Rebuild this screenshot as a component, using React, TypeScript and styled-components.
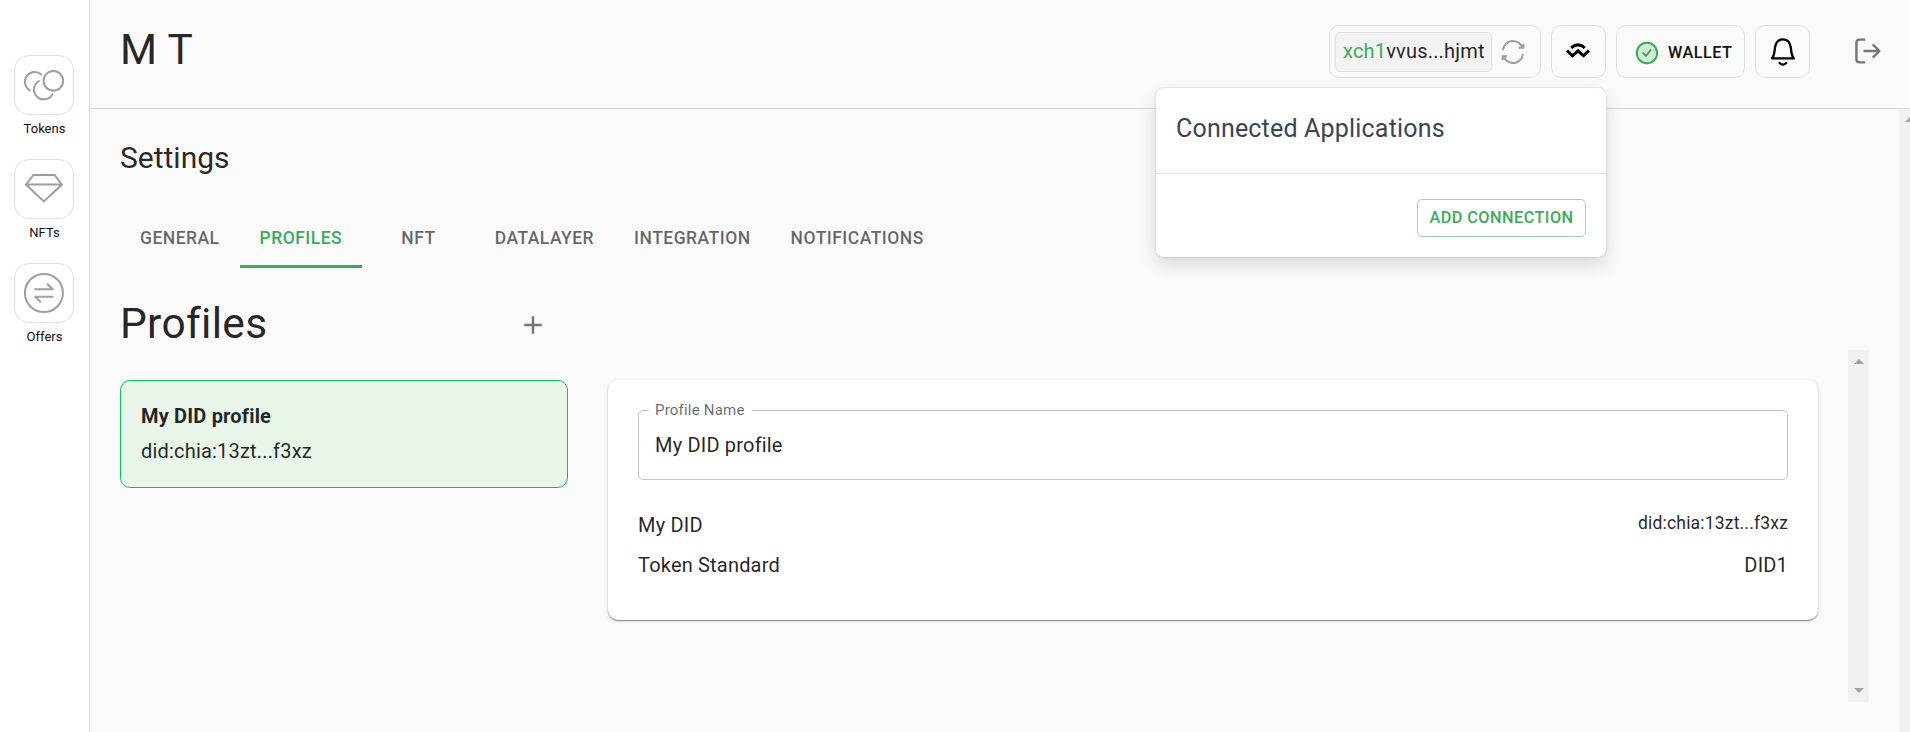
import React from "react";
import styled, { createGlobalStyle } from "styled-components";

const GlobalStyle = createGlobalStyle`
  *, *::before, *::after { box-sizing: border-box; }
  body {
    margin: 0;
    background: #fafafa;
    color: rgba(0, 0, 0, 0.87);
    font-family: Roboto, "Liberation Sans", sans-serif;
    font-size: 20px;
    letter-spacing: 0.00938em;
    overflow: hidden;
  }
  h1, h2, h3, p { margin: 0; font-weight: 400; }
  button { font: inherit; letter-spacing: inherit; color: inherit; padding: 0; background: none; border: 0; }
  svg { display: block; flex: none; }
`;

const Shell = styled.div`
  display: flex;
  height: 732px;
`;

const Sidebar = styled.nav`
  flex: none;
  width: 90px;
  padding: 55px 15px 0 14px;
  background: #fff;
  border-right: 1px solid #dcdcdc;
  display: flex;
  flex-direction: column;
  gap: 20px;
`;

const SideItem = styled.a`
  display: flex;
  flex-direction: column;
  align-items: center;
  gap: 4px;
`;

const SideIcon = styled.span`
  width: 60px;
  height: 60px;
  border: 1px solid #e0e0e0;
  border-radius: 15px;
`;

const SideLabel = styled.span`
  padding-left: 1px;
  font-size: 13px;
  line-height: 20px;
  letter-spacing: 0;
  color: #111;
`;

const Main = styled.div`
  flex: 1;
  min-width: 0;
  display: flex;
  flex-direction: column;
`;

const Header = styled.header`
  position: relative;
  flex: none;
  height: 109px;
  padding: 25px 28px 0 30px;
  border-bottom: 1px solid #d9d9d9;
  display: flex;
  align-items: flex-start;
`;

const WalletName = styled.h1`
  flex: 1;
  font-size: 42.5px;
  line-height: 49px;
  letter-spacing: 0.00735em;
`;

const Actions = styled.div`
  display: flex;
  gap: 10px;
`;

const Outlined = styled.div<{ $width: number }>`
  width: ${(p) => p.$width}px;
  height: 53px;
  border: 1px solid #e0e0e0;
  border-radius: 10px;
  display: flex;
  align-items: center;
  justify-content: center;
`;

const AddressBox = styled(Outlined)`
  justify-content: flex-start;
  padding-left: 5px;
  gap: 9px;
`;

const ConnectBox = styled(Outlined)`
  padding: 0 2px 2px 0;
`;

const Address = styled.div`
  width: 157px;
  height: 40px;
  padding-left: 7px;
  line-height: 36px;
  background: #f3f3f3;
  border: 1px solid #e0e0e0;
  border-radius: 5px;
  white-space: nowrap;
`;

const Prefix = styled.span`
  color: #3aac59;
`;

const WalletButton = styled(Outlined)`
  justify-content: flex-start;
  padding: 2px 0 0 18px;
  gap: 9px;
  font-size: 16.25px;
  letter-spacing: 0.02857em;
  font-weight: 500;
  color: #111;
`;

const LogoutButton = styled.button`
  margin: 12px 0 0 44px;
`;

const Popover = styled.section`
  position: absolute;
  z-index: 2;
  top: 88px;
  left: 1066px;
  width: 450px;
  height: 169px;
  background: #fff;
  border-radius: 8px;
  box-shadow: 0 0 2px rgba(0, 0, 0, 0.22), 0 8px 18px rgba(0, 0, 0, 0.14);
`;

const PopoverTitle = styled.h2`
  height: 86px;
  padding: 21px 20px 0;
  border-bottom: 1px solid #e0e0e0;
  font-size: 25px;
  line-height: 40px;
  letter-spacing: 0.0075em;
  color: #3b4455;
`;

const PopoverActions = styled.div`
  display: flex;
  justify-content: flex-end;
  padding: 25px 20px 0;
`;

const AddConnection = styled.button`
  width: 169px;
  height: 38px;
  padding-bottom: 2px;
  border: 1px solid #9cd5ac;
  border-radius: 5px;
  color: #3aac59;
  font-size: 16.25px;
  font-weight: 500;
  letter-spacing: 0.02857em;
  white-space: nowrap;
`;

const Body = styled.div`
  flex: 1;
  min-height: 0;
  display: flex;
`;

const Content = styled.main`
  flex: 1;
  min-width: 0;
  padding: 29px 30px 30px;
  display: flex;
  flex-direction: column;
`;

const PageTitle = styled.h2`
  font-size: 30px;
  line-height: 40px;
  letter-spacing: 0;
`;

const Tabs = styled.div`
  display: flex;
  flex: none;
  height: 60px;
  margin-top: 30px;
`;

const Tab = styled.button<{ $active: boolean }>`
  min-width: 112.5px;
  padding: 3px 20px 0;
  border-bottom: 3px solid ${(p) => (p.$active ? "#3aac59" : "transparent")};
  color: ${(p) => (p.$active ? "#3aac59" : "rgba(0, 0, 0, 0.6)")};
  font-size: 17.5px;
  font-weight: 500;
  letter-spacing: 0.0275em;
`;

const ProfilesBar = styled.div`
  display: flex;
  align-items: center;
  justify-content: space-between;
  flex: none;
  width: 448px;
  height: 52px;
  margin-top: 30px;
`;

const ProfilesTitle = styled.h2`
  font-size: 42.5px;
  line-height: 52px;
  letter-spacing: 0.00735em;
`;

const AddButton = styled.button`
  padding: 2px 20px 0 0;
`;

const Panels = styled.div`
  flex: 1;
  display: flex;
`;

const ProfileCard = styled.article`
  flex: none;
  width: 448px;
  height: 108px;
  margin-top: 30px;
  padding: 18px 20px;
  background: #e8f5e9;
  border: 1px solid #00c853;
  border-radius: 10px;
  line-height: 35px;
`;

const CardName = styled.h3`
  font-size: 20px;
  font-weight: 700;
`;

const DetailCard = styled.article`
  flex: 1;
  height: 240px;
  margin: 30px 30px 0 40px;
  padding: 30px;
  background: #fff;
  border-radius: 10px;
  box-shadow: 0 1px 1px rgba(0, 0, 0, 0.4), 0 1px 4px rgba(0, 0, 0, 0.14);
`;

const Field = styled.fieldset`
  height: 80px;
  margin: -10px 0 30px;
  padding: 0 10px;
  border: 1px solid #c4c4c4;
  border-radius: 5px;
`;

const FieldLabel = styled.legend`
  height: 20px;
  padding: 0 7px 0 6px;
  font-size: 15px;
  line-height: 20px;
  letter-spacing: 0.014em;
  color: rgba(0, 0, 0, 0.6);
`;

const FieldValue = styled.p`
  padding: 11px 6px 0;
  line-height: 29px;
`;

const Row = styled.div`
  display: flex;
  justify-content: space-between;
  height: 30px;
  line-height: 30px;
  margin-bottom: 10px;
`;

const DidValue = styled.span`
  font-size: 17.5px;
  line-height: 26px;
`;

const InnerScrollbar = styled.div`
  flex: none;
  width: 21px;
  padding: 9px 0;
  background: #f1f1f1;
  display: flex;
  flex-direction: column;
  align-items: center;
  justify-content: space-between;
`;

const PageScrollbar = styled.div`
  flex: none;
  width: 11px;
  padding: 8px 0 0 6px;
  background: #f1f1f1;
  overflow: hidden;
`;

const stroke = {
  fill: "none",
  stroke: "#9e9e9e",
  strokeWidth: 2,
  strokeLinecap: "round" as const,
  strokeLinejoin: "round" as const,
};

const sideItems = [
  {
    label: "Tokens",
    icon: (
      <>
        <circle cx="39.4" cy="25.8" r="9.8" />
        <path d="M27.3 19.4A9.9 9.9 0 1 0 15.8 35.4" />
        <path d="M25 26A9.8 9.8 0 1 0 38.3 39.4" />
      </>
    ),
  },
  {
    label: "NFTs",
    icon: <path strokeLinejoin="miter" d="M19.4 16H40.6L48 25.6L29.8 42.4L12 25.6ZM12 25.6H48" />,
  },
  {
    label: "Offers",
    icon: (
      <>
        <circle cx="29.9" cy="30" r="19" />
        <path d="M21.2 26.3H38.7L33.6 21.2M38.7 33.7H21.2L26.3 38.8" />
      </>
    ),
  },
];

const tabs = ["GENERAL", "PROFILES", "NFT", "DATALAYER", "INTEGRATION", "NOTIFICATIONS"];

const RefreshIcon = () => (
  <svg width="24" height="24" viewBox="-12 -12 24 24" {...stroke} strokeLinecap="butt" strokeLinejoin="miter">
    <path d="M-10 -1.8A10 10 0 0 1 9.3 -4.6M10.4 -8.2V-4.3H5.8" />
    <path d="M10 1.8A10 10 0 0 1 -9.3 4.6M-10.4 8.2V4.3H-5.8" />
  </svg>
);

const ConnectIcon = () => (
  <svg width="26" height="18" viewBox="-13 -9 26 18" {...stroke} stroke="#000" strokeWidth={3} strokeLinecap="butt" strokeLinejoin="miter">
    <path d="M-11 -0.4L-5.5 4.8L0 -0.2L5.5 4.8L11 -0.4" />
    <path d="M-6.8 -3.2Q0 -9 6.8 -3.2" />
  </svg>
);

const CheckIcon = () => (
  <svg width="24" height="24" viewBox="0 0 24 24" {...stroke} stroke="#3aac59">
    <circle cx="12" cy="12" r="10.2" fill="#d5ecdb" />
    <path d="M8.2 12.3L11 14.9L15.6 9" />
  </svg>
);

const BellIcon = () => (
  <svg width="28" height="30" viewBox="0 0 28 30" {...stroke} stroke="#000" strokeWidth={2.3}>
    <path d="M3 21.3C5.5 18.5 5.3 15.5 6 10.5C6.7 5.5 9.6 2.4 13.9 2.4C18.2 2.4 21.1 5.5 21.8 10.5C22.5 15.5 22.3 18.5 24.8 21.3Z" />
    <path d="M10.6 26Q13.9 29.2 17.2 26" />
  </svg>
);

const LogoutIcon = () => (
  <svg width="28" height="28" viewBox="0 0 28 28" {...stroke} stroke="#757575" strokeWidth={2.4} strokeLinecap="butt">
    <path d="M11.2 2.6H5.6Q2.4 2.6 2.4 5.8V22.2Q2.4 25.4 5.6 25.4H11.2" />
    <path d="M9.6 14H25.2M18.8 7.4L25.4 14L18.8 20.6" />
  </svg>
);

const Arrow = ({ down = false }: { down?: boolean }) => (
  <svg width="10" height="5" viewBox="0 0 10 5" fill="#a3a3a3">
    <path d={down ? "M0 0H10L5 5Z" : "M0 5H10L5 0Z"} />
  </svg>
);

export default function App() {
  return (
    <Shell>
      <GlobalStyle />
      <Sidebar>
        {sideItems.map((item) => (
          <SideItem key={item.label}>
            <SideIcon>
              <svg width="58" height="58" viewBox="1 1 58 58" {...stroke}>
                {item.icon}
              </svg>
            </SideIcon>
            <SideLabel>{item.label}</SideLabel>
          </SideItem>
        ))}
      </Sidebar>
      <Main>
        <Header>
          <WalletName>M T</WalletName>
          <Actions>
            <AddressBox $width={212}>
              <Address>
                <Prefix>xch1</Prefix>vvus...hjmt
              </Address>
              <RefreshIcon />
            </AddressBox>
            <ConnectBox $width={55}>
              <ConnectIcon />
            </ConnectBox>
            <WalletButton $width={129}>
              <CheckIcon />
              WALLET
            </WalletButton>
            <Outlined $width={55}>
              <BellIcon />
            </Outlined>
          </Actions>
          <LogoutButton aria-label="Log out">
            <LogoutIcon />
          </LogoutButton>
          <Popover>
            <PopoverTitle>Connected Applications</PopoverTitle>
            <PopoverActions>
              <AddConnection>ADD CONNECTION</AddConnection>
            </PopoverActions>
          </Popover>
        </Header>
        <Body>
          <Content>
            <PageTitle>Settings</PageTitle>
            <Tabs>
              {tabs.map((tab) => (
                <Tab key={tab} $active={tab === "PROFILES"}>
                  {tab}
                </Tab>
              ))}
            </Tabs>
            <ProfilesBar>
              <ProfilesTitle>Profiles</ProfilesTitle>
              <AddButton aria-label="Add profile">
                <svg width="30" height="30" viewBox="0 0 24 24" fill="#757575">
                  <path d="M19 13h-6v6h-2v-6H5v-2h6V5h2v6h6v2z" />
                </svg>
              </AddButton>
            </ProfilesBar>
            <Panels>
              <ProfileCard>
                <CardName>My DID profile</CardName>
                <p>did:chia:13zt...f3xz</p>
              </ProfileCard>
              <DetailCard>
                <Field>
                  <FieldLabel>Profile Name</FieldLabel>
                  <FieldValue>My DID profile</FieldValue>
                </Field>
                <Row>
                  <span>My DID</span>
                  <DidValue>did:chia:13zt...f3xz</DidValue>
                </Row>
                <Row>
                  <span>Token Standard</span>
                  <span>DID1</span>
                </Row>
              </DetailCard>
              <InnerScrollbar>
                <Arrow />
                <Arrow down />
              </InnerScrollbar>
            </Panels>
          </Content>
          <PageScrollbar>
            <Arrow />
          </PageScrollbar>
        </Body>
      </Main>
    </Shell>
  );
}
